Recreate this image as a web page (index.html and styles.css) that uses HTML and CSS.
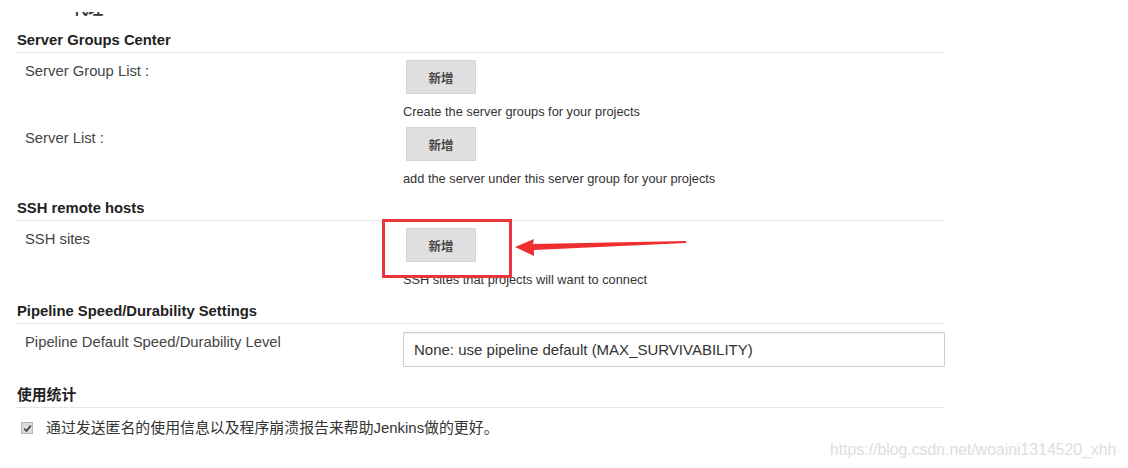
FILE: index.html
```html
<!DOCTYPE html>
<html lang="zh-CN">

<head>
    <meta charset="UTF-8">
    <meta name="viewport" content="width=device-width, initial-scale=1.0">
    <title>系统配置</title>
    <link rel="stylesheet" href="styles.css">
</head>

<body>
    <div class="page">
        <!-- 上一节被截掉的标题，只露出底部 -->
        <div class="cut-title"><div class="cut-clip"><span>· 代理</span></div></div>

        <div class="section-title first">Server Groups Center</div>
        <div class="row">
            <div class="label">Server Group List :</div>
            <div class="field">
                <button class="add-btn">新增</button>
                <div class="desc">Create the server groups for your projects</div>
            </div>
        </div>
        <div class="row">
            <div class="label">Server List :</div>
            <div class="field">
                <button class="add-btn">新增</button>
                <div class="desc">add the server under this server group for your projects</div>
            </div>
        </div>

        <div class="section-title ssh">SSH remote hosts</div>
        <div class="row">
            <div class="label">SSH sites</div>
            <div class="field">
                <button class="add-btn">新增</button>
                <div class="desc">SSH sites that projects will want to connect</div>
            </div>
        </div>

        <div class="section-title pipeline">Pipeline Speed/Durability Settings</div>
        <div class="row">
            <div class="label">Pipeline Default Speed/Durability Level</div>
            <div class="field">
                <div class="select-box">None: use pipeline default (MAX_SURVIVABILITY)</div>
            </div>
        </div>

        <div class="section-title stats">使用统计</div>
        <div class="check-row">
            <span class="checkbox">
                <svg width="9" height="9" viewBox="0 0 9 9">
                    <path d="M1.2 4.6 L3.5 7 L7.8 1.6" fill="none" stroke="#444" stroke-width="1.8"/>
                </svg>
            </span>
            <span>通过发送匿名的使用信息以及程序崩溃报告来帮助Jenkins做的更好。</span>
        </div>
    </div>

    <!-- 标注：红框和箭头 -->
    <div class="mark-box"></div>
    <svg class="mark-arrow" width="1128" height="468" viewBox="0 0 1128 468">
        <polygon points="515,247 534,239 533,244 686,241 686,243 534,250 534,256" fill="#ef2f2f"/>
    </svg>

    <div class="watermark">https://blog.csdn.net/woaini1314520_xhh</div>
</body>

</html>
```

FILE: styles.css
```css
body {
    /* 字体和页面底色 */
    margin: 0;
    background: #ffffff;
    font-family: "Liberation Sans", Arial, "Noto Sans CJK SC", sans-serif;
    color: #333333;
    width: 1128px;
    height: 468px;
    overflow: hidden;
    position: relative;
}

.page {
    margin-left: 16px;
    width: 929px;
}

.cut-title {
    /* 只留下文字最下面几像素 */
    height: 4px;
    padding: 12px 0 0 48px;
}

.cut-clip {
    height: 4px;
    overflow: hidden;
    font-size: 15px;
    font-weight: bold;
    color: #333;
}

.cut-clip span {
    display: block;
    margin-top: -12px;
    line-height: 18px;
}

.section-title {
    /* 分组标题 + 下划线 */
    font-size: 14.8px;
    font-weight: bold;
    line-height: 18px;
    color: #222222;
    padding: 0 0 3px 1px;
    border-bottom: 1px solid #e6e6e6;
}

.section-title.first {
    margin-top: 15px;
}

.section-title.ssh {
    margin-top: 12px;
}

.section-title.pipeline {
    margin-top: 14px;
}

.section-title.stats {
    margin-top: 19px;
}

.row {
    display: flex;
    padding-top: 7px;
}

.label {
    width: 378px;
    padding: 2px 0 0 9px;
    font-size: 14.8px;
    line-height: 18px;
    color: #444444;
    flex-shrink: 0;
}

.field {
    flex: 1;
}

.add-btn {
    /* 灰色“新增”按钮 */
    display: block;
    margin-left: 3px;
    width: 70px;
    height: 34px;
    padding: 0;
    background: #e0e0e0;
    border: 1px solid #d4d4d4;
    font-family: "Noto Sans CJK SC", sans-serif;
    font-size: 12.5px;
    font-weight: bold;
    color: #4a4a4a;
    cursor: pointer;
}

.desc {
    margin-top: 10px;
    font-size: 12.8px;
    line-height: 16px;
    color: #333333;
}

.select-box {
    margin-top: 1px;
    height: 33px;
    border: 1px solid #d0d0d0;
    box-shadow: inset 0 1px 2px rgba(0, 0, 0, 0.06);
    padding-left: 10px;
    font-size: 15px;
    line-height: 33px;
    color: #333333;
}

.check-row {
    display: flex;
    align-items: center;
    padding: 10px 0 0 5px;
    font-size: 14.9px;
    line-height: 20px;
    color: #333333;
    font-family: "Liberation Sans", "Noto Sans CJK SC", sans-serif;
}

.checkbox {
    width: 10px;
    height: 10px;
    margin-right: 13px;
    background: #dcdcdc;
    border: 1px solid #b5b5b5;
    display: flex;
    align-items: center;
    justify-content: center;
}

/* 截图上的标注 */
.mark-box {
    position: absolute;
    left: 382px;
    top: 219px;
    width: 124px;
    height: 53px;
    border: 3px solid #e8343a;
}

.mark-arrow {
    position: absolute;
    left: 0;
    top: 0;
}

.watermark {
    position: absolute;
    left: 830px;
    top: 441px;
    font-size: 15.8px;
    color: #dddddd;
}
```
